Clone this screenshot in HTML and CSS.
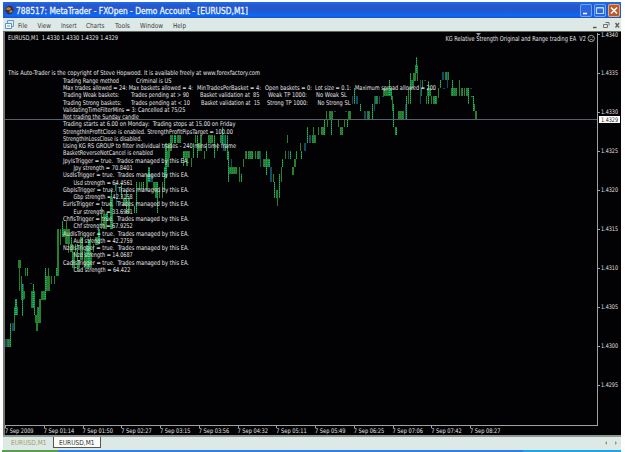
FILE: index.html
```html
<!DOCTYPE html>
<html>
<head>
    <meta charset="utf-8">
    <title>MetaTrader - EURUSD,M1</title>
    <link rel="stylesheet" href="styles.css">
</head>
<body>
    <div class="window">
        <div class="titlebar">
            <svg class="app-icon" width="9" height="10" viewBox="0 0 9 10">
                <ellipse cx="4.5" cy="5" rx="4" ry="4.3" fill="#3a302c"/>
                <path d="M1 4L3 2L6 3L5 5L2 5Z" fill="#c87838"/>
                <path d="M4 6L7 5L7.5 7L5 8Z" fill="#8b8f88"/>
            </svg>
            <svg class="title" width="250" height="16">
                <text x="0" y="11.6" textLength="232" lengthAdjust="spacingAndGlyphs">788517: MetaTrader - FXOpen - Demo Account - [EURUSD,M1]</text>
            </svg>
            <div class="window-buttons">
                <svg class="win-btn" viewBox="0 0 12 12"><path d="M3 9H7" stroke="#fff" stroke-width="1.6"/></svg>
                <svg class="win-btn" viewBox="0 0 12 12"><path d="M2.5 3.5H9.5V9H2.5ZM2.5 3H9.5" fill="none" stroke="#b8dcff" stroke-width="1.2"/></svg>
                <svg class="win-btn close" viewBox="0 0 12 12"><path d="M3 3L9 9M9 3L3 9" stroke="#fff" stroke-width="1.5"/></svg>
            </div>
        </div>

        <div class="menubar">
            <svg class="doc-icon" width="9" height="9" viewBox="0 0 9 9">
                <path d="M2.5 .5H8.5V6.5H2.5Z" fill="#d8ecf8" stroke="#6a9cc8"/>
                <path d="M.5 3.5H6.5V8.5H.5Z" fill="#f4fbff" stroke="#5a90c0"/>
                <path d="M2 6H5" stroke="#5a90c0"/>
            </svg>
            <svg class="menu" width="200" height="12">
                <text x="4" y="8.6" textLength="9.5" lengthAdjust="spacingAndGlyphs">File</text>
                <text x="23.5" y="8.6" textLength="13.5" lengthAdjust="spacingAndGlyphs">View</text>
                <text x="47" y="8.6" textLength="15.5" lengthAdjust="spacingAndGlyphs">Insert</text>
                <text x="72" y="8.6" textLength="18.5" lengthAdjust="spacingAndGlyphs">Charts</text>
                <text x="101" y="8.6" textLength="15" lengthAdjust="spacingAndGlyphs">Tools</text>
                <text x="126" y="8.6" textLength="23" lengthAdjust="spacingAndGlyphs">Window</text>
                <text x="159" y="8.6" textLength="13" lengthAdjust="spacingAndGlyphs">Help</text>
            </svg>
            <svg class="child-buttons" width="30" height="10" viewBox="0 0 30 10">
                <path d="M2 7.5H5.5" stroke="#55504a" stroke-width="1.4"/>
                <path d="M14.5 2.5H18V5.5M12.5 4.5H16.5V7.5H12.5Z" fill="none" stroke="#777068"/>
                <path d="M24.5 3L28 7.5M28 3L24.5 7.5" stroke="#665c50" stroke-width="1.3"/>
            </svg>
        </div>

        <div class="chart-frame">
            <svg class="chart" width="616" height="403" viewBox="5 32 616 403">
                <defs>
                    <pattern id="mix" width="2" height="2" patternUnits="userSpaceOnUse">
                        <rect width="2" height="2" fill="#27762b"/>
                        <rect width="1" height="1" fill="#1c9c50"/>
                    </pattern>
                    <pattern id="bright" width="2" height="2" patternUnits="userSpaceOnUse">
                        <rect width="2" height="2" fill="#00c870"/>
                        <rect y="1" width="2" height="1" fill="#1c7c40"/>
                    </pattern>
                </defs>
                <path d="M5 119.5H598" stroke="#59616d"/>
                <g id="bars" shape-rendering="crispEdges"></g>
                <path d="M476 33H481L478.500 36Z" fill="#9098a0"/>
                <path d="M597.5 33V425.500M5 425.500H598" stroke="#a0a0a0" fill="none"/>
                <g id="priceScale"></g>
                <g id="timeScale"></g>
                <g id="comment"></g>
                <text x="8" y="40.300" textLength="110" lengthAdjust="spacingAndGlyphs">EURUSD,M1&#160; 1.4330 1.4330 1.4329 1.4329</text>
                <text class="expert" x="445.500" y="41" textLength="140.500" lengthAdjust="spacingAndGlyphs">KG Relative Strength Original and Range trading EA&#160; V2</text>
                <g fill="none" stroke="#d8d8d8" stroke-width=".7">
                    <circle cx="591.200" cy="38.500" r="3.200"/>
                    <path d="M589.500 40.200Q591.200 38.400 592.900 40.200M590 37.300V38M592.400 37.300V38"/>
                </g>
            </svg>
        </div>

        <div class="tabs">
            <div class="tab"><svg width="38" height="10"><text x="0" y="7.700" textLength="35.500" lengthAdjust="spacingAndGlyphs">EURUSD,M1</text></svg></div>
            <div class="tab active"><svg width="38" height="10"><text x="0" y="7.700" textLength="35.500" lengthAdjust="spacingAndGlyphs">EURUSD,M1</text></svg></div>
            <svg class="tab-arrows" width="14" height="6" viewBox="0 0 14 6">
                <path d="M3 1L1 3L3 5ZM11 1L13 3L11 5Z" fill="#a09468"/>
            </svg>
        </div>
    </div>
    <div class="taskbar"><div class="start"></div><div class="tray"></div></div>

    <script src="chart.js"></script>
</body>
</html>
```
FILE: styles.css
```css
body {
    width: 625px;
    height: 452px;
    margin: 0;
    overflow: hidden;
    background: #fdfefd;
    font-family: "DejaVu Sans", sans-serif;
}
svg {
    display: block;
}
.window {
    width: 618px;
    height: 448px;
    margin-left: 3px;
    padding-top: 2px;
}
.titlebar {
    display: flex;
    align-items: center;
    height: 16px;
    padding: 0 1px 0 2px;
    box-sizing: border-box;
    background: linear-gradient(#1a70f0 0, #2858cc 20%, #2456cc 50%, #0c68f4 85%, #1c50c8 100%);
}
.title {
    margin-left: 2px;
    font-size: 8.6px;
    fill: #eef8ff;
    stroke: #e4f2ff;
    stroke-width: .3px;
}
.window-buttons {
    display: flex;
    gap: 2px;
    margin-left: auto;
}
.win-btn {
    width: 12px;
    height: 13px;
    border-radius: 2px;
    background: #2a66e0;
    box-shadow: inset 0 0 0 1px #6ea4f4;
}
.win-btn.close {
    background: #b85c28;
    box-shadow: inset 0 0 0 1px #e0a888;
}
.menubar {
    display: flex;
    align-items: center;
    height: 13px;
    padding-left: 2px;
    background: #dce9e7;
}
.menu {
    font-size: 6.8px;
    fill: #3c3c38;
}
.child-buttons {
    margin-left: auto;
}
.chart-frame {
    height: 403px;
    border-top: 1px solid #66665e;
    border-left: 2px solid #77756c;
    background: #020104;
}
.chart {
    font-size: 6.5px;
    fill: #e4e4e4;
}
.chart .scale {
    font-size: 6.3px;
}
.chart .expert {
    font-size: 6.8px;
}
.chart .current {
    fill: #222;
}
.tabs {
    display: flex;
    align-items: flex-start;
    height: 15px;
    padding-left: 2px;
    border-top: 2px solid #8c9892;
    background: #dce9e7;
    box-sizing: border-box;
}
.tab {
    width: 48px;
    height: 11px;
    box-sizing: border-box;
    padding-left: 6px;
    font-size: 6.8px;
    fill: #a49c60;
}
.tab.active {
    fill: #303030;
    background: #fcfefc;
    border: 1px solid #55584e;
    border-top: 0;
    padding-left: 5px;
}
.tab-arrows {
    margin: 3px 3px 0 auto;
}
.taskbar {
    display: flex;
    height: 2px;
    margin: 0 4px 0 2px;
    background: #2f80e4;
}
.start {
    width: 56px;
    background: #58a050;
}
.tray {
    width: 98px;
    margin-left: auto;
    background: #1ca4ec;
}
```
FILE: chart.js
```javascript
const NS = 'http://www.w3.org/2000/svg';
const colors = { g: '#28802c', l: 'url(#bright)', m: 'url(#mix)', b: '#104c68' };

// x, top, width, bottom, color
const bars = `
5 339 2 347 b;7 339 4 347 m;10 323 1 347 l;12 323 2 331 b;14 307 4 315 m;14 315 1 331 g;15 299 2 315 l
18 260 3 268 g;19 260 1 291 g;21 276 1 300 g;22 284 1 316 l;23 284 1 300 b;23 291 2 299 g;25 268 1 276 g;27 268 1 276 l
30 283 2 284 b;31 291 4 308 m;33 284 1 308 l;34 308 1 315 l;35 315 3 323 g;36 323 2 331 g;37 307 3 323 m;39 299 2 323 g
41 291 5 300 m;45 268 1 300 l;46 276 4 291 m;48 268 1 291 g;51 276 1 284 g;54 276 1 284 g;56 268 1 276 l;57 229 2 276 g
60 229 1 245 g;62 221 1 237 l;63 229 2 237 g;65 229 5 244 m;66 221 1 229 g;68 229 1 253 g;70 244 3 252 g;71 237 1 245 l
72 252 3 268 m;75 244 1 252 g;77 244 1 270 l;78 260 1 268 g;80 237 3 260 m;79 260 1 268 g;84 252 8 268 m;86 245 2 252 l;88 240 2 268 l;90 237 1 260 g
93 244 1 252 g;95 237 3 245 m;98 229 2 244 l;101 207 1 229 g;103 214 4 229 m;106 213 2 221 l;110 198 3 229 m;111 190 1 229 l
115 183 2 191 g;116 183 1 206 b;121 183 1 198 l;123 198 4 206 m;126 190 1 214 l;128 198 2 213 m;134 206 1 213 l;136 182 1 213 l;139 182 1 190 g
141 182 1 190 g;143 182 1 190 l;146 174 2 190 g;148 167 2 182 l;150 174 3 182 b;153 182 2 190 m;155 182 3 198 m;157 182 1 213 l;159 190 1 198 g;162 182 1 198 g
164 167 1 190 l;165 143 2 178 l;167 151 2 167 m;168 143 2 158 g;170 135 3 143 m;174 135 2 143 l;177 135 4 143 m;170 143 2 151 g
184 151 6 158 m;183 151 1 166 l;186 158 2 166 g;191 158 1 167 g;193 143 1 158 l;195 135 1 143 g;197 135 1 158 l;198 143 3 151 m;200 135 2 151 g
204 151 1 159 g;206 143 1 151 l;208 135 5 143 m;214 135 1 158 l;217 143 1 151 g;220 135 2 143 g;222 127 1 143 l;223 135 3 151 b;225 135 1 151 g;227 135 1 160 l
228 151 1 182 l;231 159 1 167 b;229 167 8 174 m;239 167 1 182 g;241 174 1 182 l;243 159 1 167 g;245 151 2 159 m;248 151 4 159 m;252 151 1 159 l;255 151 1 159 g
257 151 4 159 m;260 151 1 167 b;263 159 6 167 m;266 151 1 175 l;269 159 1 167 l;270 167 2 182 b;274 182 1 198 l;273 174 1 182 g;277 190 1 206 g;276 190 2 198 g;279 174 1 198 l
281 167 1 182 g;282 159 1 167 l;285 151 1 159 g;287 135 1 143 g;288 151 1 159 b;292 167 2 175 g;294 159 2 167 g;290 151 1 159 l;296 151 1 159 l;301 151 1 159 l
300 143 1 151 g;304 143 2 151 b;307 127 1 143 l;309 135 2 143 b;312 135 4 143 m;313 127 1 135 g;318 127 1 135 g;321 127 3 135 g
324 119 1 135 l;326 111 1 119 g;329 111 4 119 m;327 119 1 127 g;331 119 1 135 l;338 119 1 127 g;340 127 3 135 m;344 119 1 127 g;347 119 1 127 l;348 111 3 119 g
352 96 1 104 b;354 88 1 104 l;356 96 2 104 b;360 104 1 111 l;364 111 2 119 b;367 111 3 119 m;372 104 1 119 l;374 96 1 111 b;375 96 3 104 m;379 96 1 104 b
383 88 8 96 m;389 80 1 96 l;391 88 1 100 l;392 96 1 111 g;393 104 1 127 l;395 127 2 135 g;396 127 1 135 l;398 111 3 119 g;401 111 3 119 m;405 104 1 119 b;406 96 1 119 l
408 88 1 104 g;410 73 1 104 l;411 80 3 88 m;413 73 2 81 g;415 65 1 81 g;416 57 1 73 l;417 65 1 81 g;420 80 1 104 b;421 88 1 96 g;422 80 1 88 g;426 96 1 104 g
427 88 4 96 m;428 81 1 104 l;431 96 1 104 g;433 96 4 104 g;435 96 1 104 l;438 88 1 98 g;440 80 1 88 l;442 72 2 80 b;445 72 4 80 m;447 72 1 88 b
452 80 1 96 l;451 88 1 96 g;453 88 4 96 m;459 80 1 96 g;461 88 2 96 m;464 88 1 96 g;466 88 2 96 g;468 88 1 104 l;473 96 1 111 l;474 104 1 111 g;475 111 2 119 g
146 190 2 191 b;345 111 2 112 b;334 111 2 112 b;424 80 2 81 b;443 88 2 89 b;470 88 2 89 b;382 96 2 97 b;471 96 2 97 g`;

const s = 'Trades managed by this EA.';
// each row holds [x, right edge, text] runs
const comment = [
    [[8, 260, 'This Auto-Trader is the copyright of Steve Hopwood. It is available freely at www.forexfactory.com']],
    [[63, 119, 'Trading Range method'], [136, 171.5, 'Criminal is US']],
    [[63, 193, 'Max trades allowed = 24: Max baskets allowed = 4:'], [197, 261, 'MinTradesPerBasket = 4:'], [265, 312, 'Open baskets = 0:'], [315, 351, 'Lot size = 0.1:'], [355, 436, 'Maximum spread allowed = 200']],
    [[63, 119.3, 'Trading Weak baskets:'], [131, 189, 'Trades pending at > 90'], [200, 259.5, 'Basket validation at\u00a0 85'], [268, 307, 'Weak TP 1000:'], [316, 347, 'No Weak SL']],
    [[63, 121.5, 'Trading Strong baskets:'], [131, 190, 'Trades pending at < 10'], [201, 260, 'Basket validation at\u00a0 15'], [267, 308, 'Strong TP 1000:'], [317.5, 350.5, 'No Strong SL']],
    [[63, 185.5, 'ValidatingTimeFilterMins = 3: Cancelled at 75/25']],
    [[63, 138.7, 'Not trading the Sunday candle']],
    [[63, 235.5, 'Trading starts at 6.00 on Monday:\u00a0 Trading stops at 15.00 on Friday']],
    [[63, 233, 'StrengthInProfitClose is enabled. StrengthProfitPipsTarget = 100.00']],
    [[63, 142, 'StrengthInLossClose is disabled.']],
    [[63, 236, 'Using KG RS GROUP to filter individual trades - 240 mins time frame']],
    [[63, 153, 'BasketReverseNotCancel is enabled']]
];
[['Jpy', '70.8401'], ['Usd', '64.4561'], ['Gbp', '42.3158'], ['Eur', '33.6961'], ['Chf', '67.9252'], ['Aud', '42.2759'], ['Nzd', '14.0687'], ['Cad', '64.422']].forEach(([name, value]) => {
    comment.push([[63, 189, name + 'IsTrigger = true.\u00a0 ' + s]]);
    comment.push([[73.500, name === 'Cad' ? 130.3 : 132.7, name + ' strength = ' + value]]);
});

function add(parent, tag, attrs, text) {
    const el = document.createElementNS(NS, tag);
    for (const key in attrs) el.setAttribute(key, attrs[key]);
    if (text) el.textContent = text;
    document.getElementById(parent).appendChild(el);
}

function label(parent, x, y, width, text, cls) {
    add(parent, 'text', { x, y, textLength: width, lengthAdjust: 'spacingAndGlyphs', class: cls || '' }, text);
}

bars.trim().split(/[;\n]/).forEach(row => {
    const [x, top, width, bottom, color] = row.split(' ');
    add('bars', 'rect', { x, y: top, width, height: bottom - top, fill: colors[color] });
});

comment.forEach((row, i) => {
    row.forEach(([x, end, text]) => label('comment', x, 75.4 + i * 7.28, end - x, text));
});

for (let i = 0; i < 10; i++) {
    const y = 34 + i * 39.05;
    add('priceScale', 'rect', { x: 598, y: Math.round(y), width: 2, height: 1, fill: '#a0a0a0' });
    label('priceScale', 601, y + (i ? 2 : 3), 17, (1.434 - i * 0.0005).toFixed(4), 'scale');
}
add('priceScale', 'rect', { x: 599, y: 116, width: 21, height: 7, fill: '#fff' });
label('priceScale', 601, 121.6, 17, '1.4329', 'scale current');

['2009', '01:14', '01:50', '02:27', '03:15', '03:56', '04:32', '05:11', '05:49', '06:25', '07:06', '07:42', '08:27'].forEach((time, i) => {
    const x = 5 + i * 38.75;
    add('timeScale', 'rect', { x: Math.round(x), y: 426, width: 1, height: 2, fill: '#a0a0a0' });
    label('timeScale', x, 432.8, i ? 30.5 : 28.5, '7 Sep ' + time, 'scale');
});
```
